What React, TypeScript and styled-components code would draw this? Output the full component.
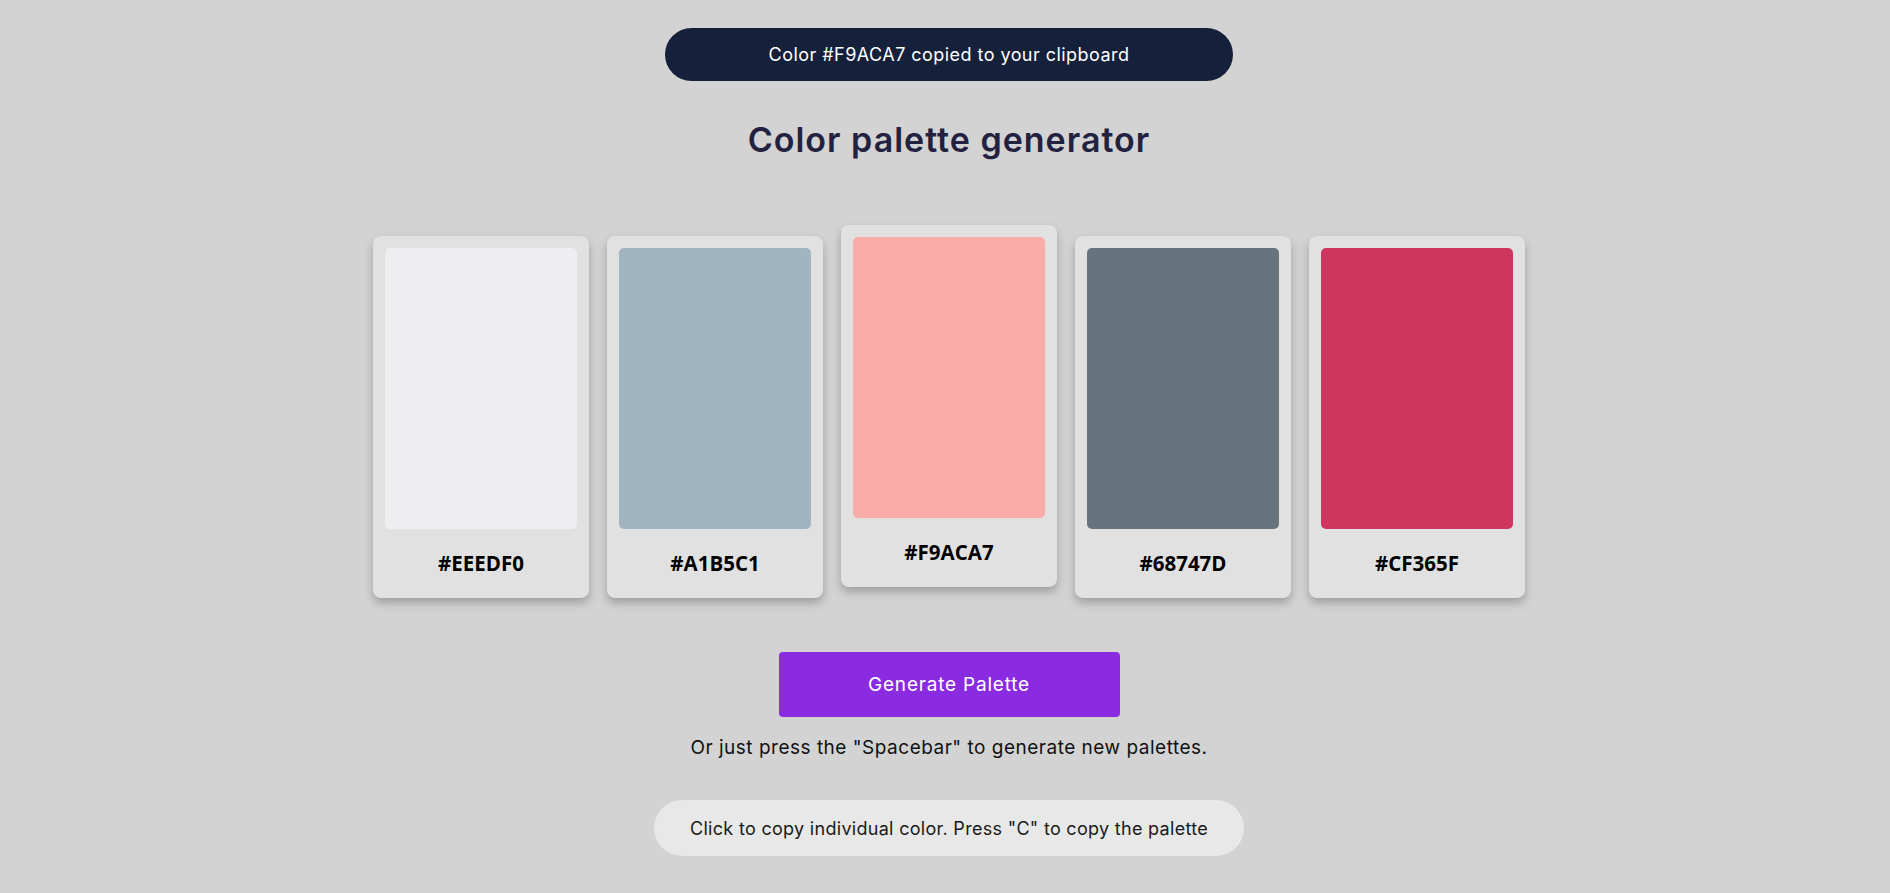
import React from "react";
import styled, { createGlobalStyle } from "styled-components";

const colors = ["#EEEDF0", "#A1B5C1", "#F9ACA7", "#68747D", "#CF365F"];
const copied = "#F9ACA7";

const GlobalStyle = createGlobalStyle`
  html, body {
    margin: 0;
    padding: 0;
    background-color: #d3d3d3;
    font-family: Inter, "Noto Sans", sans-serif;
  }
  body {
    padding-left: 8px;
  }
`;

const App = () => {
  return (
    <Page>
      <GlobalStyle />
      <Toast>Color {copied} copied to your clipboard</Toast>
      <Title>Color palette generator</Title>

      <Palette>
        {colors.map((c) => (
          <Card key={c} active={c === copied}>
            <Swatch color={c} />
            <Hex>{c}</Hex>
          </Card>
        ))}
      </Palette>

      <GenerateButton>Generate Palette</GenerateButton>
      <Hint>Or just press the "Spacebar" to generate new palettes.</Hint>
      <Tip>Click to copy individual color. Press "C" to copy the palette</Tip>
    </Page>
  );
};

export default App;

const Page = styled.div`
  display: flex;
  flex-direction: column;
  align-items: center;
  padding-top: 28px;
  min-height: 865px;
`;

const Toast = styled.div`
  width: 568px;
  height: 53px;
  border-radius: 27px;
  background-color: #15203a;
  color: #ffffff;
  font-size: 18px;
  letter-spacing: 0.45px;
  display: flex;
  align-items: center;
  justify-content: center;
`;

const Title = styled.h1`
  margin: 40px 0 0;
  font-size: 34px;
  line-height: 38px;
  letter-spacing: 1px;
  font-weight: 600;
  color: #222240;
`;

const Palette = styled.div`
  display: flex;
  gap: 18px;
  margin-top: 77px;
`;

const Card = styled.div<{ active?: boolean }>`
  width: 216px;
  height: 362px;
  box-sizing: border-box;
  padding: 12px 12px 0;
  background-color: #e1e1e1;
  border-radius: 8px;
  box-shadow: 0 5px 10px rgba(0, 0, 0, 0.25);
  display: flex;
  flex-direction: column;
  cursor: pointer;
  transform: ${(p) => (p.active ? "translateY(-11px)" : "none")};
`;

const Swatch = styled.div<{ color: string }>`
  height: 281px;
  border-radius: 5px;
  background-color: ${(p) => p.color};
`;

const Hex = styled.div`
  flex: 1;
  display: flex;
  align-items: center;
  justify-content: center;
  padding-bottom: 2px;
  font-family: "Open Sans", "DejaVu Sans", sans-serif;
  font-weight: 700;
  font-size: 20.5px;
  color: #000000;
`;

const GenerateButton = styled.button`
  margin-top: 54px;
  width: 341px;
  height: 65px;
  border: none;
  border-radius: 4px;
  background-color: #8a2be2;
  color: #ffffff;
  font-family: Inter, "Noto Sans", sans-serif;
  font-size: 19px;
  letter-spacing: 0.8px;
  cursor: pointer;
`;

const Hint = styled.p`
  margin: 19px 0 0;
  font-size: 19px;
  line-height: 24px;
  letter-spacing: 0.5px;
  color: #111111;
`;

const Tip = styled.div`
  margin-top: 40px;
  width: 590px;
  height: 56px;
  border-radius: 28px;
  background-color: #e8e8e8;
  color: #1a1a1a;
  font-size: 18px;
  letter-spacing: 0.3px;
  display: flex;
  align-items: center;
  justify-content: center;
`;
